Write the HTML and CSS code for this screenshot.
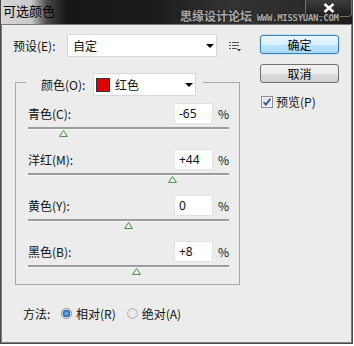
FILE: index.html
```html
<!DOCTYPE html>
<html lang="zh-CN">

<head>
 <meta charset="UTF-8">
 <title>可选颜色</title>
 <link rel="stylesheet" href="styles.css">
</head>

<body>
 <div class="window">
  <!-- Title bar -->
  <div class="titlebar">
   <span class="title">可选颜色</span>
   <span class="watermark">思缘设计论坛 <span class="wm-url">WWW.MISSYUAN.COM</span></span>
   <div class="close">
    <svg width="12" height="10" viewBox="0 0 12 10"><path d="M1.5 1 L10.5 9 M10.5 1 L1.5 9" stroke="#fff" stroke-width="2.4"/></svg>
   </div>
  </div>

  <div class="client">
   <div class="left">
    <!-- Preset -->
    <div class="preset-row">
     <span class="preset-label">预设(E):</span>
     <div class="select preset-select"><span>自定</span><span class="caret"></span></div>
     <svg class="menu-icon" width="12" height="11" viewBox="0 0 12 11">
      <rect x="0" y="1" width="2" height="1" fill="#555"/>
      <rect x="3" y="1" width="7" height="1" fill="#555"/>
      <rect x="0" y="4" width="2" height="1" fill="#555"/>
      <rect x="3" y="4" width="7" height="1" fill="#555"/>
      <rect x="0" y="7" width="2" height="1" fill="#555"/>
      <rect x="3" y="7" width="5" height="1" fill="#555"/>
      <polygon points="8,8 12,8 10,10.5" fill="#333"/>
     </svg>
    </div>

    <!-- Colour group -->
    <fieldset class="group">
     <legend>
      <div class="legend-inner">
       <span class="legend-label">颜色(O):</span>
       <div class="select color-select"><span class="swatch"></span><span>红色</span><span class="caret"></span></div>
      </div>
     </legend>

     <div class="slider">
      <div class="slider-head"><span class="slider-label">青色(C):</span><span class="num">-65</span><span class="pct">%</span></div>
      <div class="track"></div>
      <div class="thumb-line"><svg class="thumb" style="margin-left:30.5px" width="9" height="7" viewBox="0 0 9 7"><polygon points="4.5,0.6 8.4,6.4 0.6,6.4" fill="#f4fbf2" stroke="#3f8c3a" stroke-width="1"/></svg></div>
     </div>

     <div class="slider">
      <div class="slider-head"><span class="slider-label">洋红(M):</span><span class="num">+44</span><span class="pct">%</span></div>
      <div class="track"></div>
      <div class="thumb-line"><svg class="thumb" style="margin-left:140.2px" width="9" height="7" viewBox="0 0 9 7"><polygon points="4.5,0.6 8.4,6.4 0.6,6.4" fill="#f4fbf2" stroke="#3f8c3a" stroke-width="1"/></svg></div>
     </div>

     <div class="slider">
      <div class="slider-head"><span class="slider-label">黄色(Y):</span><span class="num">0</span><span class="pct">%</span></div>
      <div class="track"></div>
      <div class="thumb-line"><svg class="thumb" style="margin-left:96px" width="9" height="7" viewBox="0 0 9 7"><polygon points="4.5,0.6 8.4,6.4 0.6,6.4" fill="#f4fbf2" stroke="#3f8c3a" stroke-width="1"/></svg></div>
     </div>

     <div class="slider">
      <div class="slider-head"><span class="slider-label">黑色(B):</span><span class="num">+8</span><span class="pct">%</span></div>
      <div class="track"></div>
      <div class="thumb-line"><svg class="thumb" style="margin-left:104px" width="9" height="7" viewBox="0 0 9 7"><polygon points="4.5,0.6 8.4,6.4 0.6,6.4" fill="#f4fbf2" stroke="#3f8c3a" stroke-width="1"/></svg></div>
     </div>
    </fieldset>

    <!-- Method -->
    <div class="method-row">
     <span class="method-label">方法:</span>
     <span class="radio checked"></span><span class="radio-text">相对(R)</span>
     <span class="radio"></span><span class="radio-text">绝对(A)</span>
    </div>
   </div>

   <!-- Buttons -->
   <div class="side">
    <div class="btn btn-default">确定</div>
    <div class="btn">取消</div>
    <div class="check-row">
     <svg class="checkbox" width="12" height="12" viewBox="0 0 12 12">
      <rect x="0.5" y="0.5" width="11" height="11" fill="#f4f4f4" stroke="#8e8f8f"/>
      <rect x="2" y="2" width="8" height="8" fill="#e6e6e6"/>
      <path d="M2.6 6.2 L4.8 8.6 L9.4 2.8" fill="none" stroke="#2d4f9e" stroke-width="1.7"/>
     </svg>
     <span>预览(P)</span>
    </div>
   </div>
  </div>
 </div>
</body>

</html>
```

FILE: styles.css
```css
* {
 box-sizing: border-box;
}

body {
 margin: 0;
 background: #fff;
 font-family: "Noto Sans CJK SC", "Noto Sans", sans-serif;
 font-size: 12px;
 color: #111;
}

.window {
 width: 353px;
 height: 344px;
 display: flex;
 flex-direction: column;
 background: #4a4a4a;
 padding: 0 1px 1px 1px;
}

/* Title bar */
.titlebar {
 position: relative;
 height: 24px;
 display: flex;
 align-items: flex-start;
 background: linear-gradient(to right, #d6d6d6 0, #cacaca 30px, #4a4a4a 46px, #161616 66px, #1b1b1b 150px, #333 230px, #2b2b2b 300px, #1c1c1c 100%);
}

.title {
 padding: 3px 0 0 2px;
 font-size: 13px;
 line-height: 16px;
 color: #000;
}

.watermark {
 position: absolute;
 left: 179px;
 top: 9px;
 font-size: 12px;
 font-weight: bold;
 line-height: 14px;
 color: #a8a8a8;
 text-shadow: 1px 0 #222, -1px 0 #222, 0 1px #222, 0 -1px #222;
 white-space: nowrap;
}

.wm-url {
 margin-left: 2px;
 font-family: "DejaVu Sans Mono", monospace;
 font-size: 9px;
 letter-spacing: -0.3px;
}

.close {
 margin-left: auto;
 width: 47px;
 height: 17px;
 display: flex;
 align-items: center;
 justify-content: center;
 border: 1px solid #6e6e6e;
 border-top: none;
 border-radius: 0 0 4px 4px;
 background: linear-gradient(#3c3c3c, #1e1e1e);
}

/* Client area */
.client {
 flex: 1;
 display: flex;
 background: #ececec;
 border: 1px solid #7c7c7c;
 padding: 9px 0 0 11px;
}

.left {
 width: 230px;
}

.preset-row {
 display: flex;
 align-items: center;
 height: 23px;
}

.preset-label {
 width: 54px;
}

.select {
 display: flex;
 align-items: center;
 height: 23px;
 background: #fff;
 border: 1px solid #d8d8d8;
 padding-left: 5px;
}

.preset-select {
 width: 150px;
}

.caret {
 margin-left: auto;
 margin-right: 2px;
 width: 0;
 height: 0;
 border-left: 4px solid transparent;
 border-right: 4px solid transparent;
 border-top: 4px solid #000;
}

.menu-icon {
 margin-left: 12px;
 margin-top: 2px;
}

/* Colour group */
.group {
 width: 225px;
 margin: 12px 0 0 2px;
 padding: 7px 10px 9px 12px;
 border: 1px solid #a8a8a8;
 min-width: 0;
}

.group legend {
 margin-left: -2px;
 padding: 4px 7px 0 15px;
}

.legend-inner {
 display: flex;
 align-items: center;
}

.legend-label {
 width: 52px;
}

.color-select {
 width: 103px;
 padding-left: 2px;
}

.swatch {
 width: 14px;
 height: 14px;
 background: #e00000;
 border: 1px solid #333;
 margin-right: 5px;
}

.slider {
 margin-bottom: 12px;
}

.slider:last-child {
 margin-bottom: 0;
}

.slider-head {
 display: flex;
 align-items: center;
 height: 21px;
}

.slider-label {
 flex: 1;
}

.num {
 width: 39px;
 height: 21px;
 line-height: 19px;
 background: #fff;
 border: 1px solid #e2e2e2;
 padding-left: 4px;
 font-family: "Noto Sans", sans-serif;
}

.pct {
 width: 11px;
 margin-left: 5px;
 text-align: right;
}

.track {
 margin-top: 3px;
 height: 2px;
 background: #9c9c9c;
 box-shadow: 0 1px 0 #f8f8f8;
}

.thumb-line {
 height: 8px;
 padding-top: 1px;
}

.thumb {
 display: block;
}

/* Method */
.method-row {
 display: flex;
 align-items: center;
 height: 16px;
 margin: 20px 0 0 10px;
}

.method-label {
 width: 38px;
}

.radio {
 width: 11px;
 height: 11px;
 border-radius: 50%;
 border: 1px solid #b5b5b5;
 background: radial-gradient(circle, #f2f2f2 0, #dcdcdc 100%);
 margin-right: 4px;
}

.radio.checked {
 border-color: #8a8a8a;
 background: radial-gradient(circle, #7fc4f5 0, #2b7fd0 2.5px, #1b5aa8 3.5px, #eaeaea 4px, #f5f5f5 100%);
}

.radio-text {
 margin-right: 11px;
}

/* Buttons */
.side {
 margin-left: 17px;
 padding-top: 1px;
 width: 79px;
}

.btn {
 height: 19px;
 line-height: 17px;
 text-align: center;
 border: 1px solid #707070;
 border-radius: 3px;
 background: linear-gradient(#f2f2f2 0, #ebebeb 50%, #dddddd 50%, #cfcfcf 100%);
 color: #000;
 margin-bottom: 10px;
}

.btn-default {
 border-color: #3c7fb1;
 background: linear-gradient(#eaf6fd 0, #d9f0fc 50%, #bee6fd 50%, #a7d9f5 100%);
 box-shadow: 0 0 0 1px #c4e5f6;
}

.check-row {
 display: flex;
 align-items: center;
 gap: 3px;
 margin-top: 4px;
 padding-left: 1px;
}

.checkbox {
 display: block;
}
```
